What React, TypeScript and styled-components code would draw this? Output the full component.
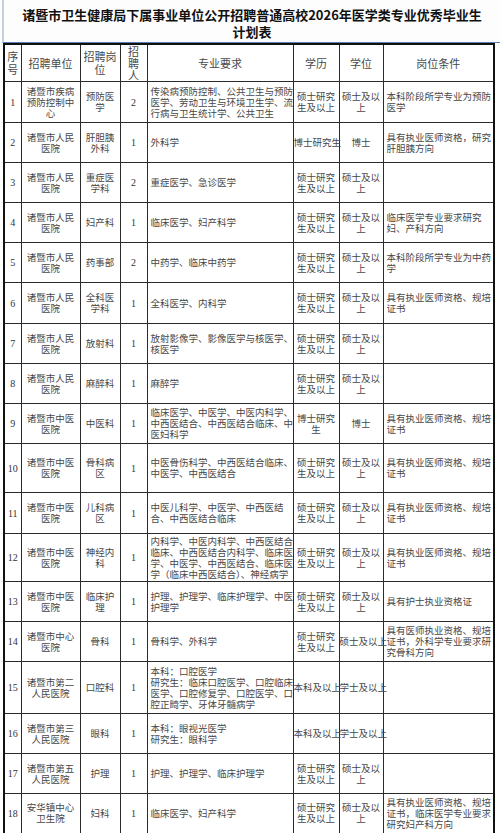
import React from "react";
import styled, { createGlobalStyle } from "styled-components";

const GlobalStyle = createGlobalStyle`
  html, body {
    margin: 0;
    padding: 0;
    background: #ffffff;
  }
  body {
    font-family: "Noto Sans CJK SC", "Liberation Sans", sans-serif;
  }
`;

const Page = styled.div`
  width: 500px;
  height: 833px;
  overflow: hidden;
  background: #ffffff;
`;

const TitleBox = styled.div`
  margin-left: 2px;
  height: 43px;
  box-sizing: border-box;
  padding-top: 6px;
  border-left: 2px solid #c3d0e2;
  border-bottom: 1px solid #5a7db3;
  background: #fdfdfe;
  text-align: center;
  font-size: 13px;
  line-height: 17px;
  font-weight: 700;
  color: #111111;
  white-space: nowrap;
`;

const TableWrap = styled.div`
  padding-left: 3px;
`;

const Table = styled.table`
  width: 490px;
  table-layout: fixed;
  border-collapse: collapse;
  border: 2px solid #111111;
  color: #474747;
`;

const HeadCell = styled.th<{ $lh?: number }>`
  height: 35px;
  padding: 0;
  border: 1px solid #2b2b2b;
  font-weight: 400;
  font-size: 11px;
  line-height: ${(p) => p.$lh ?? 13}px;
  text-align: center;
  vertical-align: middle;
  color: #4a4a4a;
  overflow: visible;
  white-space: nowrap;
`;

const Cell = styled.td<{ $left?: boolean }>`
  padding: 0 ${(p) => (p.$left ? "3px" : "0")};
  border: 1px solid #2b2b2b;
  font-size: 9.5px;
  line-height: 11px;
  text-align: ${(p) => (p.$left ? "left" : "center")};
  vertical-align: middle;
  white-space: nowrap;
  overflow: visible;
`;

const NumCell = styled(Cell)`
  font-family: "Liberation Serif", "Noto Sans CJK SC", serif;
  font-size: 10px;
  color: #333333;
`;

const Line = styled.div`
  white-space: nowrap;
`;

type Row = {
  h: number;
  unit: string[];
  post: string[];
  n: number;
  major: string[];
  edu: string[];
  degree: string[];
  cond: string[];
};

const MASTER = ["硕士研究", "生及以上"];
const MASTER_DEG = ["硕士及以", "上"];
const RENMIN = ["诸暨市人民", "医院"];
const ZHONGYI = ["诸暨市中医", "医院"];
const GUIPEI = ["具有执业医师资格、规培", "证书"];

const rows: Row[] = [
  {
    h: 41,
    unit: ["诸暨市疾病", "预防控制中", "心"],
    post: ["预防医", "学"],
    n: 2,
    major: ["传染病预防控制、公共卫生与预防", "医学、劳动卫生与环境卫生学、流", "行病与卫生统计学、公共卫生"],
    edu: MASTER,
    degree: MASTER_DEG,
    cond: ["本科阶段所学专业为预防", "医学"],
  },
  {
    h: 40,
    unit: RENMIN,
    post: ["肝胆胰", "外科"],
    n: 1,
    major: ["外科学"],
    edu: ["博士研究生"],
    degree: ["博士"],
    cond: ["具有执业医师资格，研究", "肝胆胰方向"],
  },
  {
    h: 40,
    unit: RENMIN,
    post: ["重症医", "学科"],
    n: 2,
    major: ["重症医学、急诊医学"],
    edu: MASTER,
    degree: MASTER_DEG,
    cond: [],
  },
  {
    h: 40,
    unit: RENMIN,
    post: ["妇产科"],
    n: 1,
    major: ["临床医学、妇产科学"],
    edu: MASTER,
    degree: MASTER_DEG,
    cond: ["临床医学专业要求研究", "妇、产科方向"],
  },
  {
    h: 40,
    unit: RENMIN,
    post: ["药事部"],
    n: 2,
    major: ["中药学、临床中药学"],
    edu: MASTER,
    degree: MASTER_DEG,
    cond: ["本科阶段所学专业为中药", "学"],
  },
  {
    h: 41,
    unit: RENMIN,
    post: ["全科医", "学科"],
    n: 1,
    major: ["全科医学、内科学"],
    edu: MASTER,
    degree: MASTER_DEG,
    cond: GUIPEI,
  },
  {
    h: 40,
    unit: RENMIN,
    post: ["放射科"],
    n: 1,
    major: ["放射影像学、影像医学与核医学、", "核医学"],
    edu: MASTER,
    degree: MASTER_DEG,
    cond: [],
  },
  {
    h: 40,
    unit: RENMIN,
    post: ["麻醉科"],
    n: 1,
    major: ["麻醉学"],
    edu: MASTER,
    degree: MASTER_DEG,
    cond: [],
  },
  {
    h: 40,
    unit: ZHONGYI,
    post: ["中医科"],
    n: 1,
    major: ["临床医学、中医学、中医内科学、", "中西医结合、中西医结合临床、中", "医妇科学"],
    edu: ["博士研究", "生"],
    degree: ["博士"],
    cond: GUIPEI,
  },
  {
    h: 49,
    unit: ZHONGYI,
    post: ["骨科病", "区"],
    n: 1,
    major: ["中医骨伤科学、中西医结合临床、", "中医学、中西医结合"],
    edu: MASTER,
    degree: MASTER_DEG,
    cond: GUIPEI,
  },
  {
    h: 41,
    unit: ZHONGYI,
    post: ["儿科病", "区"],
    n: 1,
    major: ["中医儿科学、中医学、中西医结", "合、中西医结合临床"],
    edu: MASTER,
    degree: MASTER_DEG,
    cond: GUIPEI,
  },
  {
    h: 48,
    unit: ZHONGYI,
    post: ["神经内", "科"],
    n: 1,
    major: [
      "内科学、中医内科学、中西医结合",
      "临床、中西医结合内科学、临床医",
      "学、中医学、中西医结合、临床医",
      "学（临床中西医结合）、神经病学",
    ],
    edu: MASTER,
    degree: MASTER_DEG,
    cond: GUIPEI,
  },
  {
    h: 40,
    unit: ZHONGYI,
    post: ["临床护", "理"],
    n: 1,
    major: ["护理、护理学、临床护理学、中医", "护理学"],
    edu: MASTER,
    degree: MASTER_DEG,
    cond: ["具有护士执业资格证"],
  },
  {
    h: 40,
    unit: ["诸暨市中心", "医院"],
    post: ["骨科"],
    n: 1,
    major: ["骨科学、外科学"],
    edu: MASTER,
    degree: ["硕士及以上"],
    cond: ["具有医师执业资格、规培", "证书，外科学专业要求研", "究骨科方向"],
  },
  {
    h: 52,
    unit: ["诸暨市第二", "人民医院"],
    post: ["口腔科"],
    n: 1,
    major: [
      "本科：口腔医学",
      "研究生：临床口腔医学、口腔临床",
      "医学、口腔修复学、口腔医学、口",
      "腔正畸学、牙体牙髓病学",
    ],
    edu: ["本科及以上"],
    degree: ["学士及以上"],
    cond: [],
  },
  {
    h: 40,
    unit: ["诸暨市第三", "人民医院"],
    post: ["眼科"],
    n: 1,
    major: ["本科：眼视光医学", "研究生：眼科学"],
    edu: ["本科及以上"],
    degree: ["学士及以上"],
    cond: [],
  },
  {
    h: 40,
    unit: ["诸暨市第五", "人民医院"],
    post: ["护理"],
    n: 1,
    major: ["护理、护理学、临床护理学"],
    edu: MASTER,
    degree: MASTER_DEG,
    cond: [],
  },
  {
    h: 40,
    unit: ["安华镇中心", "卫生院"],
    post: ["妇科"],
    n: 1,
    major: ["临床医学、妇产科学"],
    edu: MASTER,
    degree: MASTER_DEG,
    cond: ["具有执业医师资格、规培", "证书，临床医学专业要求", "研究妇产科方向"],
  },
];

const Lines = ({ items }: { items: string[] }) => (
  <>
    {items.map((t, i) => (
      <Line key={i}>{t}</Line>
    ))}
  </>
);

const App = () => {
  return (
    <Page>
      <GlobalStyle />
      <TitleBox>
        诸暨市卫生健康局下属事业单位公开招聘普通高校2026年医学类专业优秀毕业生
        <br />
        计划表
      </TitleBox>
      <TableWrap>
        <Table>
          <colgroup>
            <col style={{ width: 17 }} />
            <col style={{ width: 59 }} />
            <col style={{ width: 40 }} />
            <col style={{ width: 27 }} />
            <col style={{ width: 146 }} />
            <col style={{ width: 46 }} />
            <col style={{ width: 44 }} />
            <col style={{ width: 111 }} />
          </colgroup>
          <thead>
            <tr>
              <HeadCell>
                <Lines items={["序", "号"]} />
              </HeadCell>
              <HeadCell>招聘单位</HeadCell>
              <HeadCell>
                <Lines items={["招聘岗", "位"]} />
              </HeadCell>
              <HeadCell $lh={12}>
                <Lines items={["招", "聘", "人"]} />
              </HeadCell>
              <HeadCell>专业要求</HeadCell>
              <HeadCell>学历</HeadCell>
              <HeadCell>学位</HeadCell>
              <HeadCell>岗位条件</HeadCell>
            </tr>
          </thead>
          <tbody>
            {rows.map((r, i) => (
              <tr key={i} style={{ height: r.h }}>
                <NumCell>{i + 1}</NumCell>
                <Cell>
                  <Lines items={r.unit} />
                </Cell>
                <Cell>
                  <Lines items={r.post} />
                </Cell>
                <NumCell>{r.n}</NumCell>
                <Cell $left>
                  <Lines items={r.major} />
                </Cell>
                <Cell>
                  <Lines items={r.edu} />
                </Cell>
                <Cell>
                  <Lines items={r.degree} />
                </Cell>
                <Cell $left>
                  <Lines items={r.cond} />
                </Cell>
              </tr>
            ))}
          </tbody>
        </Table>
      </TableWrap>
    </Page>
  );
};

export default App;
